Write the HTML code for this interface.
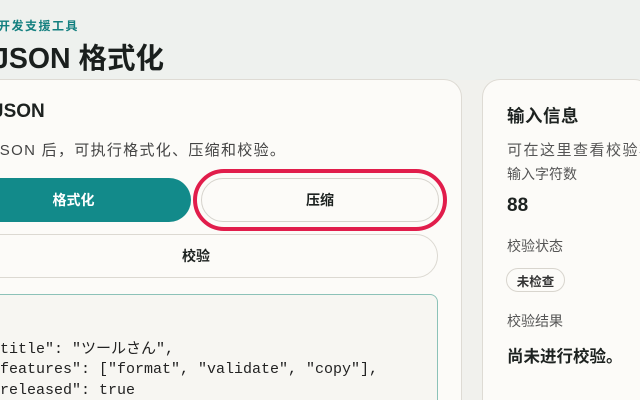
<!DOCTYPE html>
<html><head><meta charset="utf-8"><style>
*{margin:0;padding:0;box-sizing:border-box}
html,body{width:640px;height:400px;overflow:hidden}
body{position:relative;background:#f1f1ed;font-family:"Liberation Sans","Noto Sans CJK SC",sans-serif;color:#1d2220}
.hdr{position:absolute;left:0;top:0;width:640px;height:80px;background:#eef1ee}
.a{position:absolute;white-space:nowrap}
.card{position:absolute;top:79px;height:321px;background:#fcfbf8;border:1px solid #dedbd4;border-bottom:none;border-radius:18px 18px 0 0}
.btn{position:absolute;border-radius:22px;display:flex;align-items:center;justify-content:center;font-size:14px;font-weight:bold}
.mono{font-family:"Liberation Mono","DejaVu Sans Mono","Noto Sans CJK JP",monospace;font-size:15px;color:#222}
</style></head><body>
<div class="hdr"></div>
<div class="a" style="left:-2px;top:17px;font-size:12px;font-weight:bold;color:#148080;letter-spacing:1.5px">开发支援工具</div>
<div class="a" style="left:-7px;top:36px;font-size:28.5px;font-weight:bold;color:#1a1f1d">JSON 格式化</div>
<div class="card" style="left:-30px;width:492px"></div>
<div class="card" style="left:482px;width:170px"></div>
<div class="a" style="left:-7px;top:101px;font-size:19px;font-weight:bold">JSON</div>
<div class="a" style="left:-9px;top:139px;font-size:15px;color:#444;letter-spacing:1.3px">JSON 后，可执行格式化、压缩和校验。</div>
<div class="btn" style="left:-44px;top:178px;width:235px;height:44px;background:#128a8a;color:#fff">格式化</div>
<div style="position:absolute;left:193px;top:169px;width:254px;height:62px;border:4px solid #e11d4b;border-radius:31px"></div>
<div class="btn" style="left:201px;top:178px;width:238px;height:44px;background:#fcfbf8;border:1px solid #d6d3cc">压缩</div>
<div class="btn" style="left:-46px;top:234px;width:484px;height:44px;background:#fcfbf8;border:1px solid #dcd9d2">校验</div>
<div style="position:absolute;left:-20px;top:294px;width:458px;height:106px;background:#f7f6f2;border:1px solid #8cc2b8;border-bottom:none;border-radius:8px 8px 0 0"></div>
<div class="a mono" style="left:-9px;top:337px">"title": "ツールさん",</div>
<div class="a mono" style="left:-9px;top:361px">"features": ["format", "validate", "copy"],</div>
<div class="a mono" style="left:-9px;top:382px;height:18px;overflow:hidden">"released": true</div>
<div class="a" style="left:507px;top:103px;font-size:17.5px;font-weight:bold;letter-spacing:.5px">输入信息</div>
<div class="a" style="left:507px;top:139px;font-size:15px;color:#555;letter-spacing:1.5px;width:133px;overflow:hidden">可在这里查看校验状态</div>
<div class="a" style="left:507px;top:164px;font-size:14px;color:#555">输入字符数</div>
<div class="a" style="left:507px;top:195px;font-size:19px;font-weight:bold">88</div>
<div class="a" style="left:507px;top:236px;font-size:14px;color:#555">校验状态</div>
<div class="a" style="left:506px;top:268px;width:59px;height:24px;border:1px solid #d8d5ce;border-radius:12px;font-size:12.5px;font-weight:bold;display:flex;align-items:center;justify-content:center;color:#333">未检查</div>
<div class="a" style="left:507px;top:311px;font-size:14px;color:#555">校验结果</div>
<div class="a" style="left:507px;top:343px;font-size:16.5px;font-weight:bold">尚未进行校验。</div>
</body></html>
